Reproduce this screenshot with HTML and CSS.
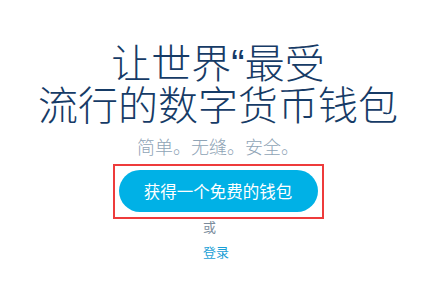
FILE: index.html
```html
<!DOCTYPE html>
<html lang="zh-CN">
<head>
<meta charset="utf-8">
<link rel="stylesheet" href="styles.css">
</head>
<body>
<main class="hero">
  <h1 class="title">让世界“最受<br>流行的数字货币钱包</h1>
  <p class="tagline">简单。无缝。安全。</p>
  <div class="highlight">
    <a class="cta" href="#">获得一个免费的钱包</a>
  </div>
  <div class="alt">
    <div class="or">或</div>
    <a class="login" href="#">登录</a>
  </div>
</main>
</body>
</html>
```
FILE: styles.css
```css
html, body {
  margin: 0;
  padding: 0;
  background: #ffffff;
}
body {
  font-family: "Liberation Sans", "Noto Sans CJK SC", sans-serif;
  width: 445px;
  height: 285px;
  overflow: hidden;
}
.hero {
  display: flex;
  flex-direction: column;
  align-items: center;
  padding: 43px 9px 0 0;
}
.title {
  margin: 0;
  font-size: 40px;
  line-height: 42px;
  font-weight: 300;
  color: #163b66;
  text-align: center;
  letter-spacing: 0;
}
.tagline {
  margin: 10px 0 0 0;
  font-size: 18px;
  line-height: 22px;
  color: #8fa4b6;
  font-weight: 300;
}
.highlight {
  margin-top: 5px;
  border: 2px solid #ee3b3b;
  padding: 4px 4px 5px 4px;
  display: flex;
}
.cta {
  display: flex;
  align-items: center;
  justify-content: center;
  width: 199px;
  height: 42px;
  border-radius: 21px;
  background: #00b1e6;
  color: #ffffff;
  font-size: 16.5px;
  text-decoration: none;
}
.alt {
  width: 30px;
  margin-top: 1px;
  padding-left: 0;
  font-size: 13px;
  line-height: 16px;
}
.or {
  color: #7b8c9c;
}
.login {
  display: block;
  margin-top: 9px;
  color: #1a9fd6;
  text-decoration: none;
}
```
